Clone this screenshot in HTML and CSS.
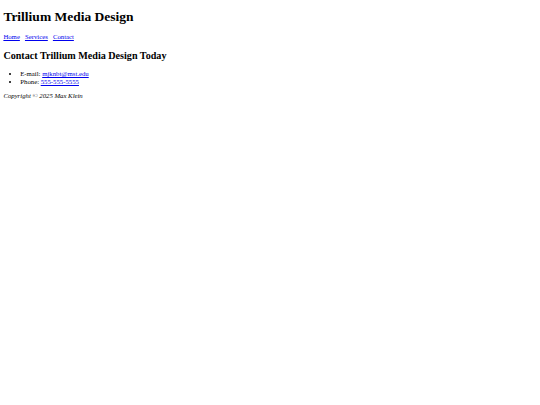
FILE: index.html
```html
<!DOCTYPE html>
<html lang="en">
<head>
<meta charset="utf-8">
<title>Contact - Trillium Media Design</title>
<link rel="stylesheet" href="styles.css">
</head>
<body>
<header class="site-header">
<h1 class="site-title">Trillium Media Design</h1>
<nav class="site-nav">
<a href="#">Home</a>
<a href="#">Services</a>
<a href="#">Contact</a>
</nav>
</header>
<main class="content">
<h2 class="page-title">Contact Trillium Media Design Today</h2>
<ul class="contact-list">
<li>E-mail: <a href="#">mjknbt@mst.edu</a></li>
<li>Phone: <a href="#">555-555-5555</a></li>
</ul>
</main>
<footer class="site-footer">
<p class="copyright"><em>Copyright © 2025 Max Klein</em></p>
</footer>
</body>
</html>
```

FILE: styles.css
```css
html {
  background: #ffffff;
}
body {
  margin: 3.375px;
  font-family: "Liberation Serif", "Times New Roman", serif;
  font-size: 6.75px;
  color: #000000;
}
a {
  color: #0000ee;
}
.site-title {
  font-size: 13.5px;
  font-weight: bold;
  margin: 6px 0 8px;
}
.site-nav a {
  margin-right: 3.375px;
}
.page-title {
  font-size: 10.125px;
  font-weight: bold;
  margin: 9.4px 0;
}
.contact-list {
  margin: 6.75px 0 6px;
  padding-left: 16.875px;
}
.contact-list li {
  line-height: 8px;
}
.copyright {
  margin: 6px 0 6.75px;
}
```
